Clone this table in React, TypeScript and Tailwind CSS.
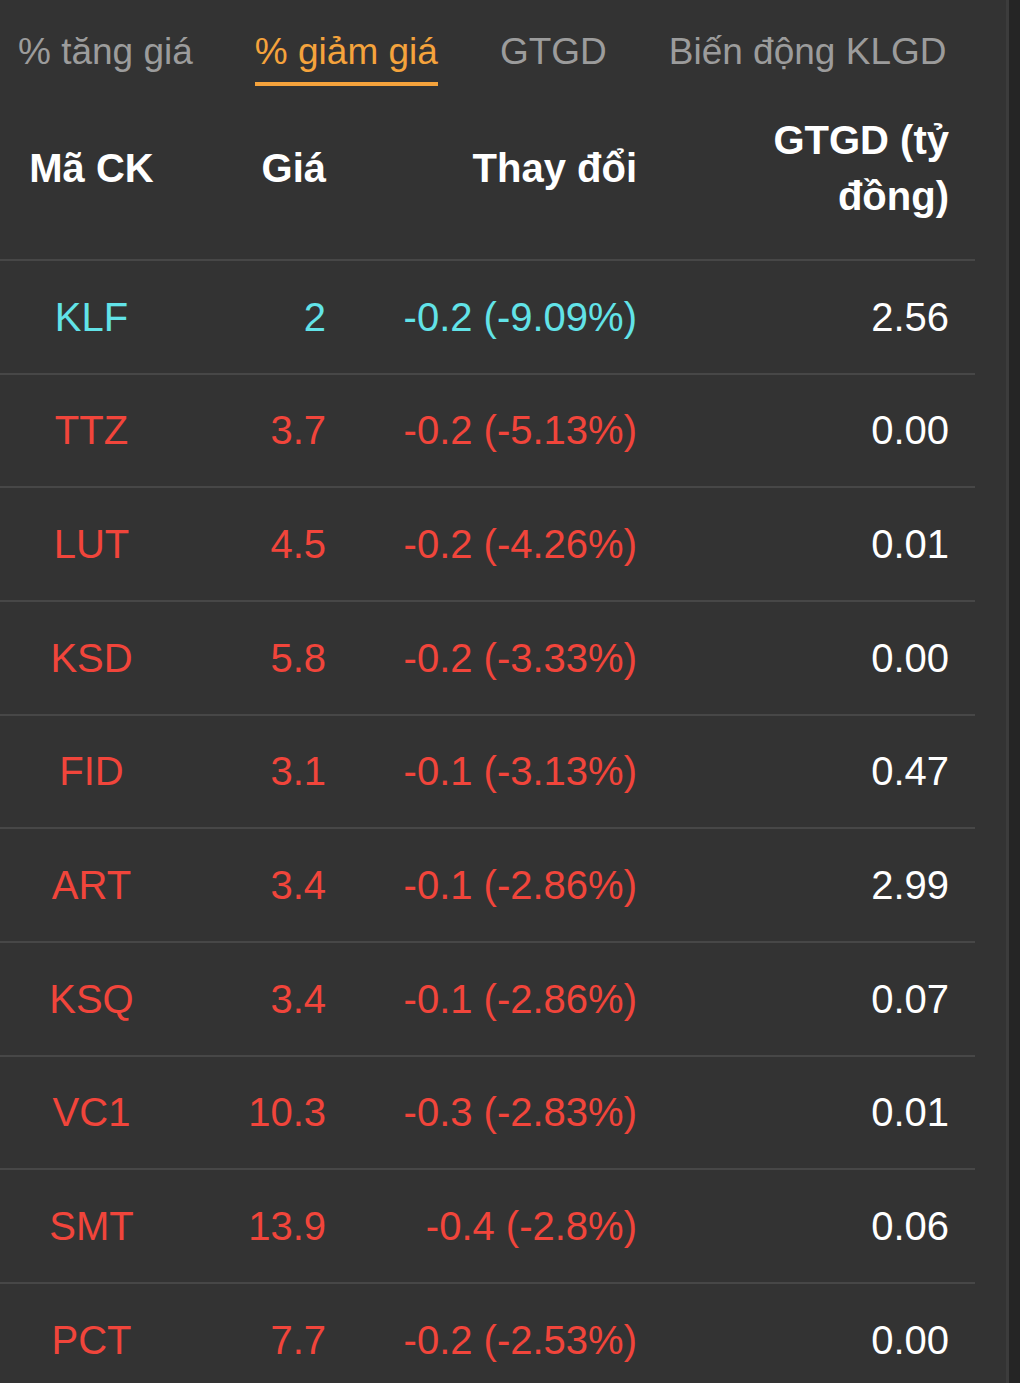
import React from 'react'

type Row = {
  code: string
  price: string
  change: string
  value: string
  floor?: boolean
}

const TABS = ['% tăng giá', '% giảm giá', 'GTGD', 'Biến động KLGD']

const ROWS: Row[] = [
  { code: 'KLF', price: '2', change: '-0.2 (-9.09%)', value: '2.56', floor: true },
  { code: 'TTZ', price: '3.7', change: '-0.2 (-5.13%)', value: '0.00' },
  { code: 'LUT', price: '4.5', change: '-0.2 (-4.26%)', value: '0.01' },
  { code: 'KSD', price: '5.8', change: '-0.2 (-3.33%)', value: '0.00' },
  { code: 'FID', price: '3.1', change: '-0.1 (-3.13%)', value: '0.47' },
  { code: 'ART', price: '3.4', change: '-0.1 (-2.86%)', value: '2.99' },
  { code: 'KSQ', price: '3.4', change: '-0.1 (-2.86%)', value: '0.07' },
  { code: 'VC1', price: '10.3', change: '-0.3 (-2.83%)', value: '0.01' },
  { code: 'SMT', price: '13.9', change: '-0.4 (-2.8%)', value: '0.06' },
  { code: 'PCT', price: '7.7', change: '-0.2 (-2.53%)', value: '0.00' },
]

const cols = 'grid grid-cols-[183px_169px_311px_312px] w-[975px]'

export default function App() {
  const active = 1

  return (
    <div className="flex h-[1383px] overflow-hidden bg-[#333333] font-['Liberation_Sans',Arial,sans-serif]">
      <div className="flex-1">
        {/* tabs */}
        <div className="flex gap-[62px] pl-[18px] pt-[30px]">
          {TABS.map((t, i) => (
            <div
              key={t}
              className={`text-[37px] leading-[44px] pb-[8px] border-b-4 ${
                i === active ? 'text-[#f5a33c] border-[#f5a33c]' : 'text-[#9c9c9c] border-transparent'
              }`}
            >
              {t}
            </div>
          ))}
        </div>

        {/* header */}
        <div className={`${cols} items-center pt-[26px] pb-[35px] text-white font-bold text-[40px] leading-[56px]`}>
          <div className="text-center">Mã CK</div>
          <div className="text-right pr-[26px]">Giá</div>
          <div className="text-right pr-[26px]">Thay đổi</div>
          <div className="text-right pr-[26px]">
            GTGD (tỷ
            <br />
            đồng)
          </div>
        </div>

        {/* rows */}
        {ROWS.map(r => {
          const color = r.floor ? 'text-[#62e3e8]' : 'text-[#f1453b]'
          return (
            <div
              key={r.code}
              className={`${cols} h-[113.67px] border-t-2 border-[#474747] items-center text-[40px] leading-[48px]`}
            >
              <div className={`text-center ${color}`}>{r.code}</div>
              <div className={`text-right pr-[26px] ${color}`}>{r.price}</div>
              <div className={`text-right pr-[26px] ${color}`}>{r.change}</div>
              <div className="text-right pr-[26px] text-white">{r.value}</div>
            </div>
          )
        })}
      </div>
      <div className="w-[3px] bg-[#3c3c3c]" />
      <div className="w-[11px] bg-[#252525]" />
    </div>
  )
}
